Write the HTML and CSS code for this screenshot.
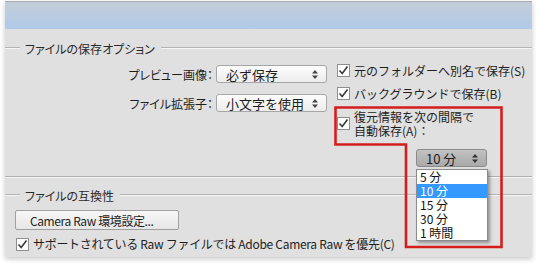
FILE: index.html
```html
<!DOCTYPE html>
<html lang="ja">

<head>
    <meta charset="UTF-8">
    <title>ファイル処理</title>
    <link rel="stylesheet" href="styles.css">
</head>

<body>

    <div class="window">
        <div class="title-bar"></div>

        <div class="group save-options">
            <div class="legend"><span>ファイルの保存オプション</span></div>

            <div class="options">
                <div class="fields">
                    <span class="field-label">プレビュー画像：</span>
                    <div class="select">必ず保存<svg class="arrows" width="6" height="9" viewBox="0 0 6 9"><path d="M3 0 L6 3.5 H0 Z M3 9 L6 5.5 H0 Z" fill="#444"/></svg></div>

                    <span class="field-label">ファイル拡張子：</span>
                    <div class="select">小文字を使用<svg class="arrows" width="6" height="9" viewBox="0 0 6 9"><path d="M3 0 L6 3.5 H0 Z M3 9 L6 5.5 H0 Z" fill="#444"/></svg></div>
                </div>

                <div class="checks">
                    <label class="check">
                        <span class="box"><svg width="11" height="11" viewBox="0 0 11 11"><path d="M1.5 5.5 L4.2 8.5 L9.5 1.5" fill="none" stroke="#3a3a3a" stroke-width="1.6"/></svg></span>
                        元のフォルダーへ別名で保存(S)
                    </label>
                    <label class="check">
                        <span class="box"><svg width="11" height="11" viewBox="0 0 11 11"><path d="M1.5 5.5 L4.2 8.5 L9.5 1.5" fill="none" stroke="#3a3a3a" stroke-width="1.6"/></svg></span>
                        バックグラウンドで保存(B)
                    </label>
                    <label class="check autosave">
                        <span class="box"><svg width="11" height="11" viewBox="0 0 11 11"><path d="M1.5 5.5 L4.2 8.5 L9.5 1.5" fill="none" stroke="#3a3a3a" stroke-width="1.6"/></svg></span>
                        <span>復元情報を次の間隔で<br>自動保存(A)：</span>
                    </label>

                    <div class="select interval open">10 分<svg class="arrows" width="6" height="9" viewBox="0 0 6 9"><path d="M3 0 L6 3.5 H0 Z M3 9 L6 5.5 H0 Z" fill="#333"/></svg>
                        <ul class="dropdown">
                            <li>5 分</li>
                            <li class="selected">10 分</li>
                            <li>15 分</li>
                            <li>30 分</li>
                            <li>1 時間</li>
                        </ul>
                    </div>
                </div>
            </div>
        </div>

        <div class="group compat">
            <div class="legend"><span>ファイルの互換性</span></div>
            <button class="button">Camera Raw 環境設定...</button>
            <label class="check">
                <span class="box"><svg width="11" height="11" viewBox="0 0 11 11"><path d="M1.5 5.5 L4.2 8.5 L9.5 1.5" fill="none" stroke="#3a3a3a" stroke-width="1.6"/></svg></span>
                サポートされている Raw ファイルでは Adobe Camera Raw を優先(C)
            </label>
        </div>
    </div>

    <!-- red highlight around the auto save option -->
    <svg class="highlight" width="540" height="267">
        <path d="M335.5 107.5 H501.5 V247 H406 V144.5 H335.5 Z" fill="none" stroke="#d41e1e" stroke-width="2.6"/>
    </svg>

</body>

</html>
```

FILE: styles.css
```css
body {
    font-family: 'Noto Sans CJK JP', sans-serif;
    font-size: 12px;
    color: #1e1e1e;
    margin: 0;
    background-color: #ffffff;
    position: relative;
    width: 540px;
    height: 267px;
    overflow: hidden;
}

.window {
    margin: 1px 8px 0 5px;
    height: 256px;
    background-color: #e0e0e0;
    box-shadow: 0 2px 5px rgba(0, 0, 0, 0.22);
}

.title-bar {
    height: 27px;
    border-top: 1px solid #a4acb6;
    background: linear-gradient(#c3cdd8, #b0cbe9);
}

.legend {
    display: flex;
    align-items: center;
    height: 14px;
    color: #2a2a2a;
    font-feature-settings: "palt";
}

.legend::before,
.legend::after {
    content: "";
    height: 1px;
    background-color: #b4b4b4;
    border-bottom: 1px solid #f4f4f4;
}

.legend::before {
    width: 15px;
    margin-right: 5px;
}

.legend::after {
    flex: 1;
    margin-left: 6px;
}

.save-options {
    padding-top: 12px;
    height: 135px;
    border-bottom: 1px solid #b0b0b0;
    box-shadow: 0 1px 0 #f6f6f6;
}

.options {
    display: flex;
    margin-top: 9px;
}

.fields {
    display: grid;
    grid-template-columns: 208px 111px;
    grid-auto-rows: 18px;
    column-gap: 3px;
    row-gap: 11px;
    align-items: center;
    padding-top: 1px;
}

.field-label {
    text-align: right;
    font-feature-settings: "palt";
}

.select {
    position: relative;
    display: flex;
    align-items: center;
    justify-content: space-between;
    height: 16px;
    padding: 0 8px 0 9px;
    border: 1px solid #a6a6a6;
    border-radius: 3px;
    background: linear-gradient(#fdfdfd, #ececec);
    font-size: 13px;
}

.checks {
    margin-left: 10px;
}

.check {
    display: flex;
    align-items: flex-start;
    line-height: 14px;
}

.checks .check {
    margin-bottom: 9px;
}

.box {
    flex: none;
    width: 11px;
    height: 11px;
    margin: 0 4px 0 0;
    border: 1px solid #8e8e8e;
    background-color: #ffffff;
}

.box svg {
    display: block;
}

.autosave .box {
    margin-top: 7px;
}

.interval {
    width: 52px;
    margin: 11px 0 0 79px;
    background: linear-gradient(#c2c2c2, #a9a9a9);
    border-color: #8a8a8a;
}

.dropdown {
    position: absolute;
    top: 19px;
    left: -1px;
    width: 70px;
    margin: 0;
    padding: 0;
    list-style: none;
    background-color: #ffffff;
    border: 1px solid #8c8c8c;
    box-shadow: 2px 2px 3px rgba(0, 0, 0, 0.35);
    font-size: 12px;
}

.dropdown li {
    height: 14px;
    line-height: 14px;
    padding-left: 3px;
    color: #111;
}

.dropdown li.selected {
    background-color: #3399ff;
    color: #ffffff;
}

.compat {
    padding-top: 11px;
}

.button {
    display: block;
    width: 164px;
    height: 20px;
    margin: 8px 0 7px 10px;
    padding: 0 0 0 14px;
    text-align: left;
    font-family: inherit;
    font-size: 12px;
    letter-spacing: -0.4px;
    color: #1e1e1e;
    border: 1px solid #a0a0a0;
    border-radius: 2px;
    background: linear-gradient(#f7f7f7, #e6e6e6);
}

.compat .check {
    margin-left: 11px;
    letter-spacing: -0.3px;
}

.compat .box {
    margin-top: 1px;
}

.highlight {
    position: absolute;
    top: 0;
    left: 0;
    pointer-events: none;
}
```
